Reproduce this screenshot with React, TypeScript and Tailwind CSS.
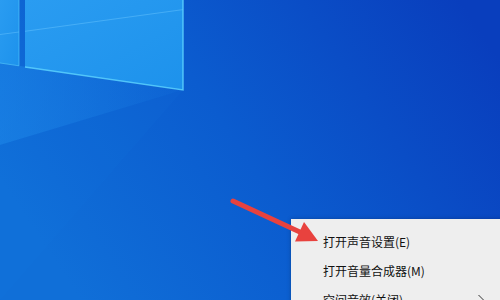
import React from "react";

const items = [
  { label: "打开声音设置(E)", sub: false },
  { label: "打开音量合成器(M)", sub: false },
  { label: "空间音效(关闭)", sub: true },
];

function Wallpaper() {
  return (
    <svg className="absolute inset-0" width="500" height="300" viewBox="0 0 500 300">
      <defs>
        <linearGradient id="base" x1="0" y1="0.6" x2="1" y2="0.2">
          <stop offset="0" stopColor="#106fd8" />
          <stop offset="0.45" stopColor="#0b5ccf" />
          <stop offset="1" stopColor="#093ebd" />
        </linearGradient>
        <linearGradient id="pane" x1="0" y1="0" x2="1" y2="1">
          <stop offset="0" stopColor="#2a9cf1" />
          <stop offset="1" stopColor="#1d92ec" />
        </linearGradient>
        <linearGradient id="beam" x1="0" y1="0" x2="1" y2="0">
          <stop offset="0" stopColor="#1f8cec" stopOpacity="0.5" />
          <stop offset="1" stopColor="#1f8cec" stopOpacity="0.1" />
        </linearGradient>
      </defs>
      <rect width="500" height="300" fill="url(#base)" />
      <polygon points="0,63 183,90 0,145" fill="url(#beam)" />
      <polygon points="0,145 183,90 0,300" fill="#1a85e6" opacity="0.08" />
      {/* window logo */}
      <polygon points="0,0 19,0 19,65.8 0,63" fill="url(#pane)" />
      <polygon points="25,0 183,0 183,90 25,67" fill="url(#pane)" />
      <line x1="0" y1="34.5" x2="19" y2="32" stroke="#6cc8ff" strokeOpacity="0.45" strokeWidth="1" />
      <line x1="25" y1="31.3" x2="183" y2="9.6" stroke="#6cc8ff" strokeOpacity="0.45" strokeWidth="1" />
      <polyline points="25,67 183,90 183,0" fill="none" stroke="#5fd6ff" strokeWidth="1.5" strokeOpacity="0.8" />
      <polyline points="0,63 19,65.8 19,0" fill="none" stroke="#5fd6ff" strokeWidth="1" strokeOpacity="0.55" />
    </svg>
  );
}

function Arrow() {
  return (
    <svg className="absolute inset-0 pointer-events-none" width="500" height="300" viewBox="0 0 500 300">
      <line x1="233" y1="201" x2="302" y2="233" stroke="#e8423e" strokeWidth="5" strokeLinecap="round" />
      <polygon points="318,241 295,241.5 304,222" fill="#e8423e" />
    </svg>
  );
}

export default function App() {
  return (
    <div className="relative w-[500px] h-[300px] overflow-hidden">
      <Wallpaper />
      <div
        className="absolute left-[291px] top-[219px] w-[220px] bg-[#eeeeee] pt-[8px] shadow-[0_0_4px_rgba(0,0,0,0.25)]"
        style={{ fontFamily: '"Noto Sans CJK SC", "Noto Sans", sans-serif' }}
      >
        {items.map((it) => (
          <div key={it.label} className="flex items-center h-[29px] pl-[32px] pr-[22px] text-[12px] text-[#111111]">
            <span className="flex-1">{it.label}</span>
            {it.sub && (
              <svg width="8" height="12" viewBox="0 0 8 12" className="mr-[4px]">
                <path d="M1.5 1 L6.5 6 L1.5 11" fill="none" stroke="#333" strokeWidth="1" />
              </svg>
            )}
          </div>
        ))}
      </div>
      <Arrow />
    </div>
  );
}
